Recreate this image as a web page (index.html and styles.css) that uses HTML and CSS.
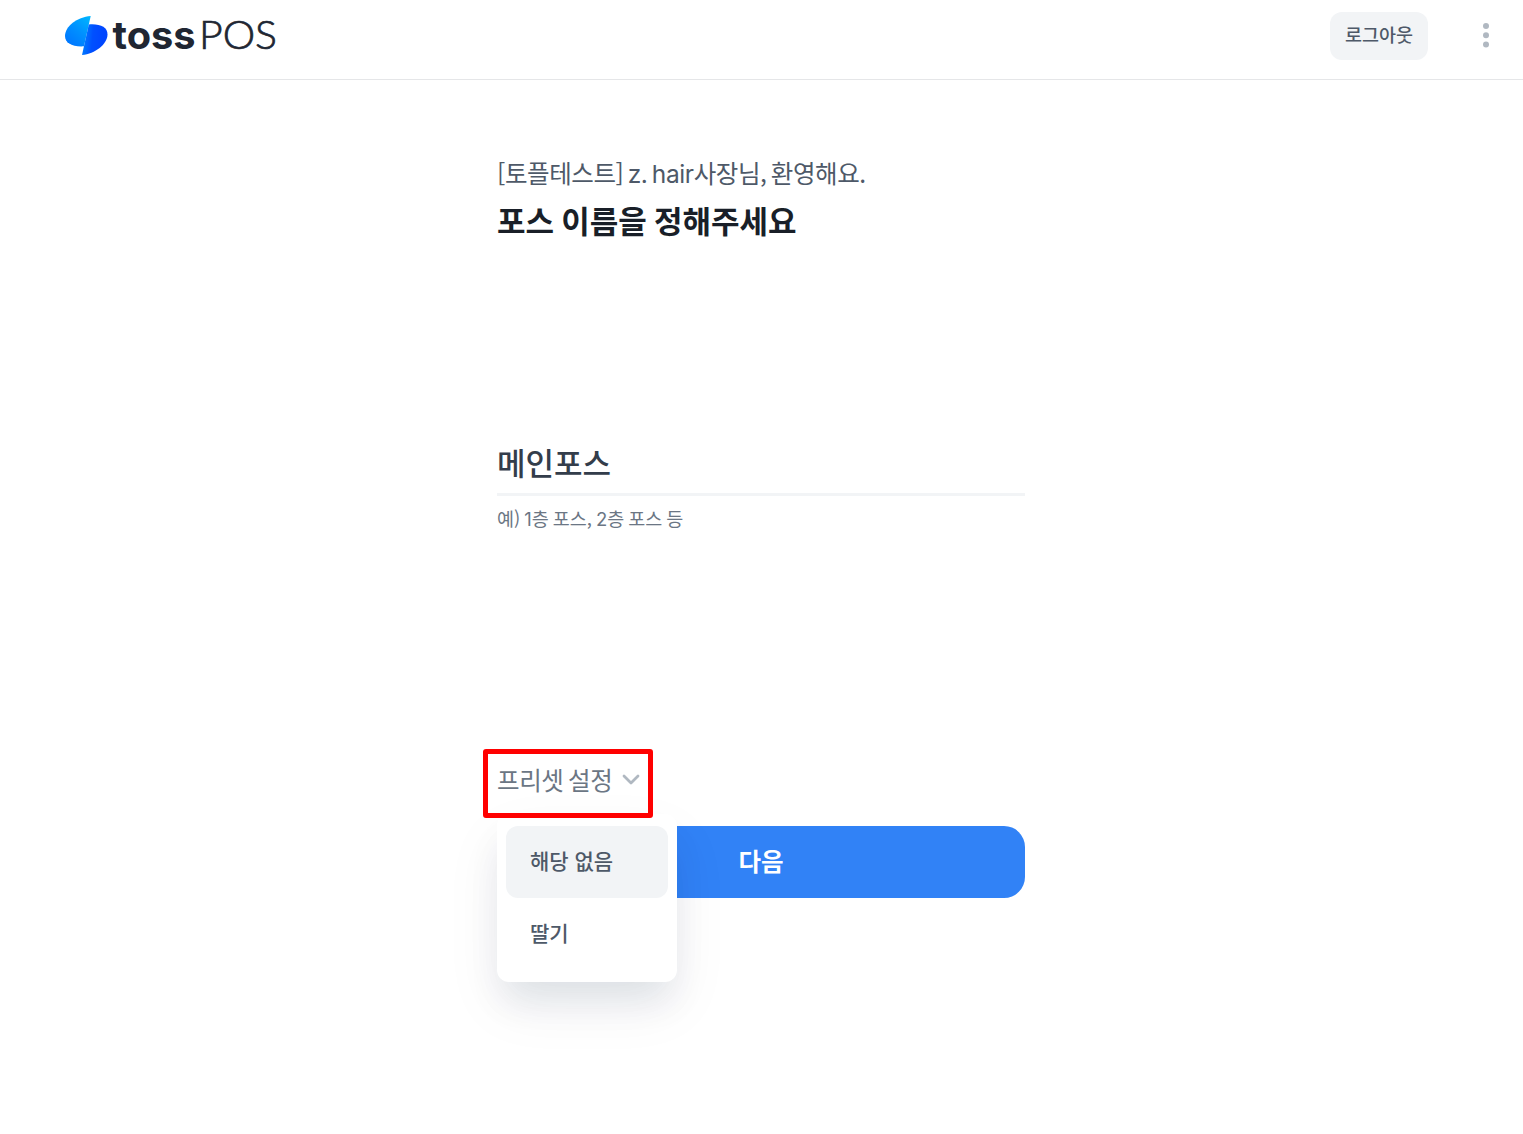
FILE: index.html
```html
<!DOCTYPE html>
<html lang="ko">
<head>
<meta charset="UTF-8">
<meta name="viewport" content="width=device-width, initial-scale=1.0">
<title>toss POS</title>
<link rel="stylesheet" href="styles.css">
</head>
<body>
<header class="header">
    <svg class="logo" width="216" height="48" viewBox="0 0 216 48" role="img" aria-label="toss POS">
        <defs>
            <linearGradient id="wingLeft" x1="1" y1="0" x2="0.3" y2="1">
                <stop offset="0" stop-color="#00b8ff"/>
                <stop offset="0.55" stop-color="#0090ff"/>
                <stop offset="1" stop-color="#0078ff"/>
            </linearGradient>
            <linearGradient id="wingRight" x1="0" y1="0.5" x2="0.8" y2="0.6">
                <stop offset="0" stop-color="#0080ff"/>
                <stop offset="0.5" stop-color="#0050ff"/>
                <stop offset="1" stop-color="#0046ff"/>
            </linearGradient>
        </defs>
        <path d="M25.700 4C12 5 0 14.500 0 24C0 31 7 35 19 34.300Z" fill="url(#wingLeft)"/>
        <path d="M23.800 12.400C35 11.500 42.500 15 42.500 22.500C42.500 32 30 42 17 43Z" fill="url(#wingRight)"/>
        <text class="logo-toss" x="47.500" y="37" textLength="83" lengthAdjust="spacingAndGlyphs">toss</text>
        <text class="logo-pos" x="134" y="37" textLength="78" lengthAdjust="spacingAndGlyphs">POS</text>
    </svg>
    <div class="header-actions">
        <button class="logout">로그아웃</button>
        <button class="more" aria-label="더보기">
            <svg width="6" height="26" viewBox="0 0 6 26" fill="#b0b8c1">
                <circle cx="3" cy="4" r="3"/>
                <circle cx="3" cy="13.200" r="3"/>
                <circle cx="3" cy="22.500" r="3"/>
            </svg>
        </button>
    </div>
</header>

<main class="container">
    <p class="welcome">[토플테스트] <span class="latin">z. hair</span>사장님, 환영해요.</p>
    <h1 class="title">포스 이름을 정해주세요</h1>

    <div class="field">
        <input class="field-input" type="text" value="메인포스" aria-label="포스 이름">
        <p class="field-help">예) <span class="latin">1</span>층 포스, <span class="latin">2</span>층 포스 등</p>
    </div>

    <div class="preset">
        <button class="preset-button">
            <span>프리셋 설정</span>
            <svg width="18" height="12" viewBox="0 0 18 12" fill="none" stroke="#b0b8c1" stroke-width="2.800" stroke-linecap="round" stroke-linejoin="round">
                <path d="M2 2L9 9L16 2"/>
            </svg>
        </button>
        <div class="highlight"></div>
        <ul class="menu">
            <li class="menu-item selected">해당 없음</li>
            <li class="menu-item">딸기</li>
        </ul>
    </div>

    <button class="next">다음</button>
</main>
</body>
</html>
```

FILE: styles.css
```css
* {
    box-sizing: border-box;
}

body {
    min-height: 100vh;
    margin: 0;
    background: #fff;
    color: #191f28;
    font-family: "Noto Sans CJK KR", sans-serif;
}

button {
    padding: 0;
    border: none;
    background: none;
    font-family: inherit;
    cursor: pointer;
}

/* 상단 바 */
.header {
    display: flex;
    justify-content: space-between;
    align-items: flex-start;
    height: 80px;
    padding: 12px 34px 0 65px;
    border-bottom: 1px solid #e5e6e8;
}

.logo {
    display: block;
}

.logo-toss {
    font-family: Inter, sans-serif;
    font-size: 39px;
    font-weight: 700;
    fill: #202632;
}

.logo-pos {
    font-family: Lato, sans-serif;
    font-size: 39px;
    font-weight: 300;
    fill: #202632;
    stroke: #202632;
    stroke-width: 0.7px;
}

.header-actions {
    display: flex;
    gap: 55px;
}

.logout {
    width: 98px;
    height: 48px;
    padding-bottom: 5px;
    border-radius: 12px;
    background: #f2f4f6;
    color: #4e5968;
    font-size: 18.500px;
    font-weight: 500;
}

.more {
    height: 46px;
}

.more svg {
    display: block;
}

/* 본문 */
.container {
    width: 528px;
    min-height: calc(100vh - 80px);
    margin: 0 auto;
    padding-top: 75px;
    position: relative;
    left: -0.5px;
}

.welcome {
    margin: 0;
    color: #4e5968;
    font-size: 24.500px;
    line-height: 36px;
    letter-spacing: -0.4px;
    word-spacing: -2.2px;
    white-space: nowrap;
}

.latin {
    font-family: Inter, sans-serif;
}

.title {
    margin: 5px 0 0;
    font-size: 31px;
    font-weight: 600;
    line-height: 46px;
    word-spacing: -1.5px;
}

.field {
    margin-top: 196px;
}

.field-input {
    display: block;
    width: 100%;
    height: 57px;
    padding: 0 0 9px;
    border: none;
    border-bottom: 3px solid #f2f4f6;
    outline: none;
    color: #333d4b;
    font-family: inherit;
    font-size: 31px;
    font-weight: 500;
}

.field-help {
    margin: 8px 0 0;
    color: #6b7684;
    font-size: 18.500px;
    line-height: 28px;
    word-spacing: -1.2px;
}

/* 프리셋 */
.preset {
    position: relative;
    height: 72px;
    margin-top: 221px;
}

.preset-button {
    display: flex;
    align-items: center;
    gap: 10px;
    height: 52px;
    color: #6b7684;
    font-size: 24.500px;
    letter-spacing: -0.4px;
    word-spacing: -1.8px;
}

.preset-button span {
    padding-bottom: 2px;
}

.highlight {
    position: absolute;
    top: -5px;
    left: -14px;
    width: 170px;
    height: 69px;
    border: 5px solid #f00;
    border-radius: 3px;
    z-index: 2;
}

.menu {
    position: absolute;
    top: 60px;
    left: 0;
    width: 180px;
    height: 168px;
    margin: 0;
    padding: 12px 9px;
    border-radius: 12px;
    background: #fff;
    box-shadow: 0 24px 60px rgba(2, 32, 71, 0.06), 0 24px 36px -6px rgba(2, 32, 71, 0.09);
    list-style: none;
    z-index: 1;
}

.menu-item {
    height: 72px;
    padding: 0 24px;
    border-radius: 12px;
    color: #4e5968;
    font-size: 21px;
    font-weight: 500;
    line-height: 69px;
}

.selected {
    background: #f2f4f6;
}

.next {
    display: block;
    width: 100%;
    height: 72px;
    padding-bottom: 4px;
    border-radius: 21px;
    background: #3182f6;
    color: #fff;
    font-size: 24.500px;
    font-weight: 600;
}
```
